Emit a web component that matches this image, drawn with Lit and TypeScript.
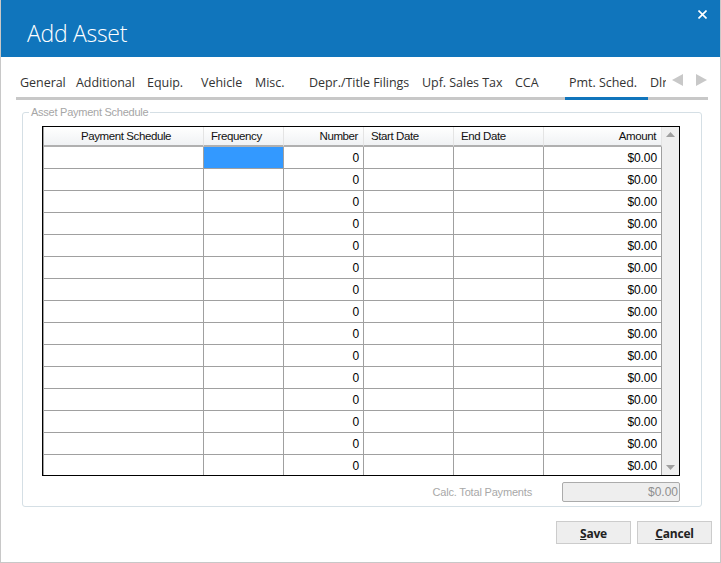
import { LitElement, html, css } from "lit";
import { customElement } from "lit/decorators.js";

const TABS: [string, number][] = [
  ["General", 56], ["Additional", 71], ["Equip.", 54], ["Vehicle", 54], ["Misc.", 54],
  ["Depr./Title Filings", 113], ["Upf. Sales Tax", 93], ["CCA", 54], ["Pmt. Sched.", 83], ["Dlr", 18],
];

@customElement("app-root")
export class AppRoot extends LitElement {
  static styles = css`
    :host { display: flex; flex-direction: column; width: 721px; height: 563px; box-sizing: border-box;
      background: #fff; border: 1px solid #c8c8c8; border-top: 0; overflow: hidden;
      font-family: "Open Sans", "Noto Sans", sans-serif; color: #222; }
    .hdr { flex: none; height: 57px; margin: 0 -1px; background: #1075bc; display: flex; justify-content: space-between; color: #fff; }
    .title { font-size: 23px; font-weight: 300; line-height: 24px; margin: 21px 0 0 27px; letter-spacing: -0.3px; }
    .close { margin: 10px 14px 0 0; width: 9px; height: 9px; }
    .strip { flex: none; box-sizing: content-box; margin: 15px 12px 0 15px; height: 25px; display: flex; border-bottom: 3px solid #c8c8c8; }
    .tabs { display: flex; width: 650px; flex: none; }
    .tab { flex: none; box-sizing: border-box; height: 25px; padding: 2px 0 0 4px; font-size: 12.5px; line-height: 17px; white-space: nowrap; position: relative; color: #333; letter-spacing: -0.04px; }
    .tab.on::after { content: ""; position: absolute; left: 0; right: 0; bottom: -3px; height: 3px; background: #1075bc; }
    .tab.clip { overflow: hidden; padding-left: 2px; }
    .arrows { display: flex; gap: 13px; margin: 2px 0 0 6px; }
    .group { flex: none; margin: 12px 18px 0 21px; height: 395px; box-sizing: border-box; border: 1px solid #d5dfe5; border-radius: 3px; position: relative; }
    .legend { position: absolute; left: 6px; top: -7px; padding: 0 2px; background: #fff; font: 11px/13px "Liberation Sans", sans-serif; color: #a6a6a6; letter-spacing: -0.25px; white-space: nowrap; }
    .grid { margin: 13px 0 0 19px; width: 638px; height: 350px; box-sizing: border-box; border: 1px solid #000; display: flex; background: #fff; overflow: hidden; }
    .cols { width: 619px; flex: none; box-sizing: border-box; border-left: 1px solid #a0a0a0; display: grid; grid-template-columns: 160px 80px 80px 90px 90px 118px; grid-template-rows: 20px repeat(15, 22px); font: 11.5px/16px "Liberation Sans", sans-serif; letter-spacing: -0.4px; }
    .h { box-sizing: border-box; background: linear-gradient(#fff, #f0f2f4); border-right: 1px solid #e4e4e4; border-bottom: 2px solid #b0b0b0; padding: 1px 4px 0 7px; color: #111; white-space: nowrap; }
    .h.c { text-align: center; padding-left: 5px; padding-right: 0; }
    .h.r { text-align: right; padding-right: 5px; }
    .d { box-sizing: border-box; border-right: 1px solid #a0a0a0; border-bottom: 1px solid #a0a0a0; padding: 3px 4px 0 0; text-align: right; color: #000; font-size: 12px; letter-spacing: -0.1px; }
    .d.sel { background: #3399ff; }
    .sb { flex: 1; background: #efefef; display: flex; flex-direction: column; justify-content: space-between; align-items: center; padding: 5px 0; }
    .foot { display: flex; justify-content: flex-end; align-items: center; height: 20px; margin: 6px 21px 0 0; font: 11px "Liberation Sans", sans-serif; color: #a8a8a8; letter-spacing: -0.18px; }
    .foot .lab { margin-right: 30px; }
    .total { width: 118px; height: 20px; box-sizing: border-box; border: 1px solid #ababab; border-radius: 2px; background: #eee; text-align: right; padding: 1px 1px 0 0; font-size: 12px; line-height: 16px; color: #8f8f8f; letter-spacing: 0; }
    .btns { flex: none; display: flex; justify-content: flex-end; gap: 6px; margin: 14px 8px 0 0; }
    .btn { width: 75px; height: 23px; box-sizing: border-box; border: 1px solid #ccc; background: #eee; text-align: center; font: bold 12px/23px "Open Sans", sans-serif; color: #222; letter-spacing: -0.2px; }
    .btn u { text-underline-offset: 1px; }
  `;

  render() {
    const rows = Array.from({ length: 15 }, (_, i) => i);
    return html`
      <div class="hdr">
        <div class="title">Add Asset</div>
        <svg class="close" viewBox="0 0 9 9"><path d="M0.5 0.5L8.5 8.5M8.5 0.5L0.5 8.5" stroke="#fff" stroke-width="1.6" fill="none"/></svg>
      </div>
      <div class="strip">
        <div class="tabs">
          ${TABS.map(([t, w]) => html`<div class="tab ${t === "Pmt. Sched." ? "on" : ""} ${t === "Dlr" ? "clip" : ""}" style="width:${w}px">${t}</div>`)}
        </div>
        <div class="arrows">
          <svg width="11" height="12" viewBox="0 0 11 12"><path d="M11 0V12L0 6Z" fill="#c8c8c8"/></svg>
          <svg width="11" height="12" viewBox="0 0 11 12"><path d="M0 0V12L11 6Z" fill="#c8c8c8"/></svg>
        </div>
      </div>
      <div class="group">
        <div class="legend">Asset Payment Schedule</div>
        <div class="grid">
          <div class="cols">
            <div class="h c">Payment Schedule</div>
            <div class="h">Frequency</div>
            <div class="h r">Number</div>
            <div class="h">Start Date</div>
            <div class="h">End Date</div>
            <div class="h r">Amount</div>
            ${rows.map((i) => html`
              <div class="d"></div>
              <div class="d ${i === 0 ? "sel" : ""}"></div>
              <div class="d">0</div>
              <div class="d"></div>
              <div class="d"></div>
              <div class="d">$0.00</div>`)}
          </div>
          <div class="sb">
            <svg width="9" height="5" viewBox="0 0 9 5"><path d="M4.5 0L9 5H0Z" fill="#a0a0a0"/></svg>
            <svg width="9" height="5" viewBox="0 0 9 5"><path d="M4.5 5L9 0H0Z" fill="#a0a0a0"/></svg>
          </div>
        </div>
        <div class="foot"><span class="lab">Calc. Total Payments</span><div class="total">$0.00</div></div>
      </div>
      <div class="btns">
        <div class="btn"><u>S</u>ave</div>
        <div class="btn"><u>C</u>ancel</div>
      </div>
    `;
  }
}
